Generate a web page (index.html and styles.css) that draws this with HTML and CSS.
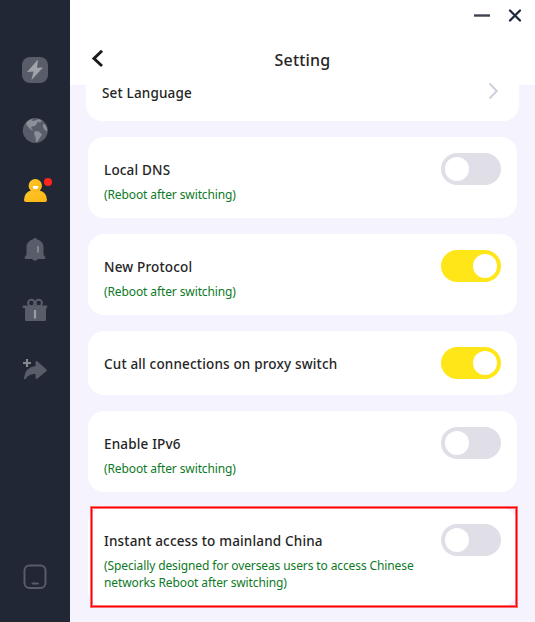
FILE: index.html
```html
<!DOCTYPE html>
<html lang="en">
<head>
    <meta charset="UTF-8">
    <meta name="viewport" content="width=device-width, initial-scale=1.0">
    <title>Setting</title>
    <link rel="stylesheet" href="styles.css">
</head>
<body>
    <div class="app">
        <div class="sidebar">
            <div class="nav-item">
                <svg width="28" height="28" viewBox="0 0 28 28">
                    <rect x="1" y="1" width="26" height="26" rx="8" fill="#585d69"/>
                    <path d="M17 3.500L6 16l6.500-.5-2 8.500L22 11.500l-6 .3z" fill="#a0a3a9"/>
                </svg>
            </div>
            <div class="nav-item">
                <svg width="28" height="28" viewBox="0 0 28 28">
                    <circle cx="14.300" cy="14.500" r="12.500" fill="#585d69"/>
                    <path d="M5 7Q8 3.500 12 2.500L10.500 5l4-.5 3-1.500 3.500 2-2 1.500-2-1-1 2-2 2.500-3 .5-1 1.500 2.500 2.500-3-1-3.500-4zM14 15l4 .5 3 3-2 3-2.500 4-1.500.8-.5-5.300-1.500-3zM22 8l2 .5 2 4v3l-2.500-2-1.500-2.500z" fill="#8b8f98"/>
                </svg>
            </div>
            <div class="nav-item">
                <svg width="28" height="28" viewBox="0 0 28 28">
                    <defs>
                        <linearGradient id="user-fill" x1="0" y1="0" x2="1" y2="1">
                            <stop offset="0" stop-color="#ffc928"/>
                            <stop offset="1" stop-color="#fbb315"/>
                        </linearGradient>
                    </defs>
                    <path d="M3 24Q3.500 15.500 10.500 14.500h7.500Q25.500 15.500 26 24q0 2-2 2H5q-2 0-2-2z" fill="url(#user-fill)"/>
                    <circle cx="14.300" cy="9.800" r="6.700" fill="url(#user-fill)"/>
                    <path d="M11.800 10h5.400q0 3.200-2.700 3.200t-2.700-3.200z" fill="#fff"/>
                </svg>
                <span class="dot"></span>
            </div>
            <div class="nav-item">
                <svg width="28" height="28" viewBox="0 0 28 28">
                    <path d="M12 3.300q2-3 4 0 6.500 2 6.500 8V18q0 1.500 1.500 2.500 1 2.500-1 2.500h-6q-3 3.500-6 0H5q-2 0-1-2.500 1.500-1 1.500-2.500v-6.700q0-6 6.500-8z" fill="#585d69"/>
                    <path d="M17 10v6.500" stroke="#858992" stroke-width="2"/>
                </svg>
            </div>
            <div class="nav-item">
                <svg width="28" height="28" viewBox="0 0 28 28">
                    <g fill="none" stroke="#585d69" stroke-width="2">
                        <circle cx="10.300" cy="7" r="3.200"/>
                        <circle cx="17.700" cy="7" r="3.200"/>
                    </g>
                    <path d="M1.800 9.500h24.400V12H25v12q0 1-1 1H5q-1 0-1-1V12H1.800z" fill="#585d69"/>
                    <path d="M14 14v8.500" stroke="#9a9da4" stroke-width="2.200"/>
                </svg>
            </div>
            <div class="nav-item">
                <svg width="28" height="28" viewBox="0 0 28 28">
                    <path d="M14.500 6q.5-2 2-.5l9 8q.8.800 0 1.600l-9 7.500q-1.500 1-2-.5V18q-7 0-10 5Q3 24 3 22q1-10.500 11.500-12z" fill="#585d69"/>
                    <path d="M6 3v8M2 7h8" stroke="#858992" stroke-width="2.200"/>
                </svg>
            </div>
            <div class="nav-item nav-bottom">
                <svg width="28" height="28" viewBox="0 0 28 28">
                    <rect x="3.500" y="2.500" width="21" height="22.500" rx="5" fill="none" stroke="#585d69" stroke-width="2"/>
                    <path d="M11.500 20.500h5.500" stroke="#585d69" stroke-width="2" stroke-linecap="round"/>
                </svg>
            </div>
        </div>
        <div class="main">
            <div class="header">
                <div class="window-buttons">
                    <svg width="16" height="16" viewBox="0 0 16 16">
                        <path d="M0 7.500h16" stroke="#3d4350" stroke-width="2.400"/>
                    </svg>
                    <svg width="16" height="16" viewBox="0 0 16 16">
                        <path d="M3 2.500l10 10M13 2.500L3 12.500" stroke="#21273a" stroke-width="2.300" stroke-linecap="round"/>
                    </svg>
                </div>
                <div class="title-bar">
                    <svg class="back" width="12" height="18" viewBox="0 0 12 18">
                        <path d="M10 -.3L2 7.500l8 7.500" fill="none" stroke="#1c1c1c" stroke-width="3"/>
                    </svg>
                    <div class="title">Setting</div>
                </div>
            </div>
            <div class="content">
                <div class="card card-link">
                    <div class="label">Set Language</div>
                    <svg width="12" height="18" viewBox="0 0 12 18">
                        <path d="M2.500 1.500L9.800 9l-7.300 7.500" fill="none" stroke="#d1cfdb" stroke-width="2"/>
                    </svg>
                </div>
                <div class="card">
                    <div class="text">
                        <div class="label">Local DNS</div>
                        <div class="hint">(Reboot after switching)</div>
                    </div>
                    <div class="switch"></div>
                </div>
                <div class="card">
                    <div class="text">
                        <div class="label">New Protocol</div>
                        <div class="hint">(Reboot after switching)</div>
                    </div>
                    <div class="switch on"></div>
                </div>
                <div class="card">
                    <div class="text">
                        <div class="label">Cut all connections on proxy switch</div>
                    </div>
                    <div class="switch on"></div>
                </div>
                <div class="card">
                    <div class="text">
                        <div class="label">Enable IPv6</div>
                        <div class="hint">(Reboot after switching)</div>
                    </div>
                    <div class="switch"></div>
                </div>
                <div class="card highlight">
                    <div class="text">
                        <div class="label">Instant access to mainland China</div>
                        <div class="hint">(Specially designed for overseas users to access Chinese networks Reboot after switching)</div>
                    </div>
                    <div class="switch"></div>
                </div>
            </div>
        </div>
    </div>
</body>
</html>
```
FILE: styles.css
```css
body {
    margin: 0;
    font-family: "Noto Sans", "Open Sans", sans-serif;
    color: #252525;
}
.app {
    display: flex;
    height: 622px;
    overflow: hidden;
}
/* left navigation */
.sidebar {
    width: 70px;
    flex-shrink: 0;
    box-sizing: border-box;
    padding: 56px 0 31px;
    background-color: #222735;
    display: flex;
    flex-direction: column;
    align-items: center;
    gap: 32px;
}
.nav-item {
    width: 28px;
    height: 28px;
    position: relative;
}
.nav-item svg {
    display: block;
}
.nav-bottom {
    margin-top: auto;
}
.dot {
    position: absolute;
    top: 2px;
    right: -3px;
    width: 8px;
    height: 8px;
    border-radius: 50%;
    background-color: #ff251c;
}
.main {
    flex: 1;
    display: flex;
    flex-direction: column;
    background-color: #f5f3fe;
}
/* header */
.header {
    height: 85px;
    flex-shrink: 0;
    background-color: #fff;
}
.window-buttons {
    display: flex;
    justify-content: flex-end;
    gap: 17px;
    height: 24px;
    padding: 8px 12px 0 0;
    box-sizing: border-box;
}
.title-bar {
    display: flex;
    align-items: center;
    height: 72px;
    padding: 0 22px;
}
.back {
    overflow: visible;
}
.title {
    flex: 1;
    margin-right: 12px;
    text-align: center;
    font-size: 16px;
    font-weight: 500;
    letter-spacing: 0.2px;
}
/* setting list */
.content {
    flex: 1;
    min-height: 0;
    padding: 0 18px;
    display: flex;
    flex-direction: column;
    gap: 16px;
}
.card {
    display: flex;
    flex-shrink: 0;
    justify-content: space-between;
    align-items: flex-start;
    padding: 16px;
    background-color: #fff;
    border-radius: 16px;
}
.card-link {
    height: 36px;
    box-sizing: border-box;
    margin: 0 -2px;
    padding: 0 20px 0 16px;
    border-radius: 0 0 16px 16px;
}
.card-link .label {
    padding-top: 0;
    line-height: 16px;
}
.card-link svg {
    margin-top: -3px;
}
.text {
    width: 325px;
}
.label {
    padding-top: 1px;
    margin-bottom: -1px;
    font-size: 13.5px;
    font-weight: 500;
    line-height: 32px;
    letter-spacing: 0.17px;
}
.hint {
    padding-top: 1px;
    margin-bottom: -1px;
    font-size: 12px;
    line-height: 17px;
    letter-spacing: -0.11px;
    color: #0d7a26;
}
.switch {
    width: 60px;
    height: 32px;
    box-sizing: border-box;
    padding: 4px;
    display: flex;
    border-radius: 16px;
    background-color: #e0dfe8;
}
.switch::before {
    content: "";
    width: 24px;
    height: 24px;
    border-radius: 50%;
    background-color: #fff;
}
.switch.on {
    justify-content: flex-end;
    background-color: #ffe619;
}
/* red frame over the last card */
.highlight {
    position: relative;
}
.highlight::after {
    content: "";
    position: absolute;
    top: -1px;
    right: 0;
    bottom: -1px;
    left: 3px;
    border: 1px solid #ff0000;
    box-shadow: 0 0 0 1px rgba(255, 0, 0, 0.55), inset 0 0 0 1px rgba(255, 0, 0, 0.55);
}
```
